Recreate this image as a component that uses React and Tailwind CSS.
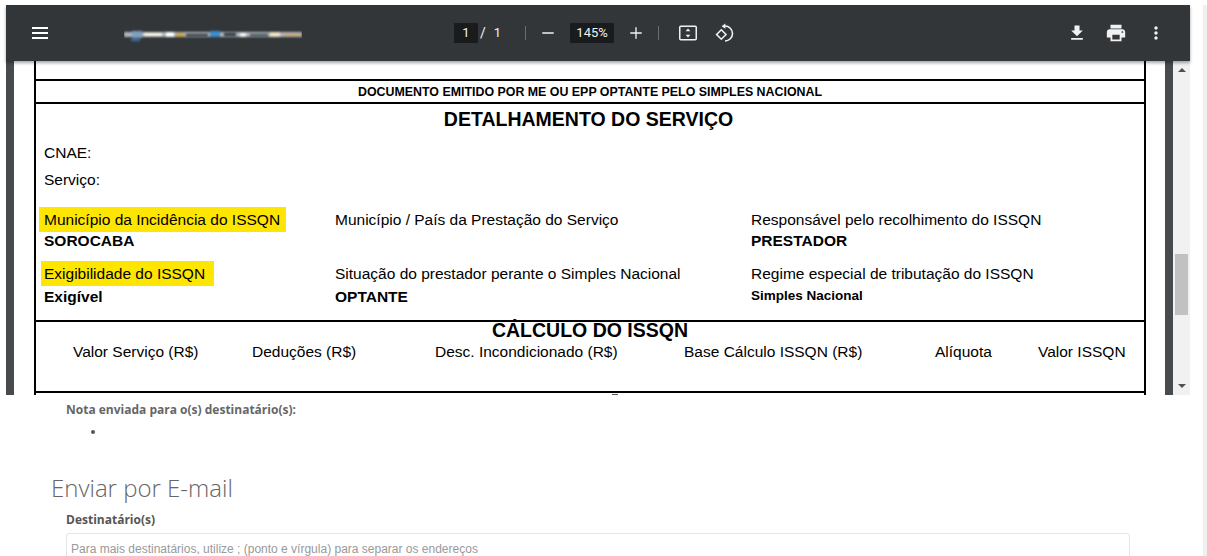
import { Minus, Plus } from 'lucide-react';

const rows = [
  [
    { label: 'Município da Incidência do ISSQN', value: 'SOROCABA', mark: 'pl-[5px] pr-[6px] -ml-[5px]' },
    { label: 'Município / País da Prestação do Serviço' },
    { label: 'Responsável pelo recolhimento do ISSQN', value: 'PRESTADOR' },
  ],
  [
    { label: 'Exigibilidade do ISSQN', value: 'Exigível', gap: 'mt-[2px]', mark: 'pl-[3px] pr-[9px] -ml-[3px]' },
    { label: 'Situação do prestador perante o Simples Nacional', value: 'OPTANTE', gap: 'mt-[2px]' },
    { label: 'Regime especial de tributação do ISSQN', value: 'Simples Nacional', gap: 'mt-px text-[13.5px]' },
  ],
];

const calcCols = ['Valor Serviço (R$)', 'Deduções (R$)', 'Desc. Incondicionado (R$)', 'Base Cálculo ISSQN (R$)', 'Alíquota', 'Valor ISSQN'];

function Icon({ d, className = 'w-6 h-6' }) {
  return (
    <svg viewBox="0 0 24 24" className={className} fill="#f1f1f1">
      <path d={d} />
    </svg>
  );
}

// the file name is smeared in the original, so this is just coloured noise
function BlurredTitle() {
  return (
    <svg width="178" height="16" viewBox="0 0 178 16" className="block">
      <g style={{ filter: 'blur(0.8px)' }}>
        <rect x="0" y="4" width="178" height="5" fill="#aeb4ba" />
        <rect x="8" y="3" width="10" height="7" fill="#7f9fc0" />
        <rect x="7" y="11" width="9" height="2" fill="#3f78b0" />
        <rect x="20" y="5" width="18" height="3" fill="#fbf6e4" />
        <rect x="42" y="4" width="8" height="5" fill="#ffffff" />
        <rect x="52" y="5" width="8" height="4" fill="#c9a050" />
        <rect x="62" y="6" width="22" height="2" fill="#23272c" />
        <rect x="86" y="3" width="10" height="6" fill="#3f8cc8" />
        <rect x="100" y="5" width="12" height="3" fill="#30363e" />
        <rect x="116" y="5" width="6" height="4" fill="#f4f4f4" />
        <rect x="126" y="6" width="18" height="2" fill="#39434e" />
        <rect x="146" y="4" width="10" height="5" fill="#f0e2c4" />
        <rect x="160" y="6" width="17" height="2" fill="#d0a060" />
      </g>
    </svg>
  );
}

export default function App() {
  return (
    <div className="w-[1207px] h-[556px] overflow-hidden flex bg-white font-['Liberation_Sans',sans-serif]">
      <div className="w-[1203px] pt-[5px] pl-[6px]">
        {/* PDF viewer */}
        <div className="w-[1184px] h-[390px] flex flex-col">
          <div className="relative z-10 h-[56px] shrink-0 flex items-center bg-[#323639] shadow-[0_2px_3px_rgba(0,0,0,0.35)] text-[#f1f1f1] font-['Roboto',sans-serif] text-[13px]">
            <div className="w-[26px]" />
            <div className="flex flex-col gap-[3px] w-[16px]">
              <span className="h-[2px] bg-white" />
              <span className="h-[2px] bg-white" />
              <span className="h-[2px] bg-white" />
            </div>
            <div className="ml-[76px] mt-[6px] w-[178px]"><BlurredTitle /></div>
            <div className="ml-[152px] w-[24px] h-[20px] bg-[#191b1c] flex items-center justify-center">1</div>
            <span className="ml-[2px] text-[14px]">/</span>
            <span className="ml-[8px]">1</span>
            <div className="ml-[24px] w-px h-[14px] bg-[#6b6e70]" />
            <Minus className="ml-[13px] w-[18px] h-[18px]" strokeWidth={1.8} />
            <div className="ml-[13px] w-[44px] h-[20px] bg-[#191b1c] flex items-center justify-center">145%</div>
            <Plus className="ml-[13px] w-[18px] h-[18px]" strokeWidth={1.8} />
            <div className="ml-[13px] w-px h-[14px] bg-[#6b6e70]" />
            <svg viewBox="0 0 20 20" className="ml-[19px] w-[20px] h-[20px]" fill="none" stroke="#f1f1f1">
              <rect x="1.75" y="3.25" width="16.5" height="13.5" rx="1" strokeWidth="1.5" />
              <path d="M10 5.5 12.4 8.2H7.6zM10 14.5 7.6 11.8h4.8z" fill="#f1f1f1" stroke="none" />
            </svg>
            <svg viewBox="0 0 20 20" className="ml-[17px] w-[20px] h-[20px]" fill="none" stroke="#f1f1f1" strokeWidth="1.6">
              <path d="M1.6 11.5 6.3 6.8l4.7 4.7-4.7 4.7z" />
              <path d="M10 3a7.5 7.5 0 0 1 0 15" />
              <path d="M10.4 .6 6.6 3.2l3.8 2.6z" fill="#f1f1f1" stroke="none" />
            </svg>
            <div className="ml-auto flex items-center">
              <Icon d="M19 9h-4V3H9v6H5l7 7 7-7zM5 18v2h14v-2H5z" className="w-[20px] h-[20px]" />
              <Icon d="M19 8H5c-1.66 0-3 1.34-3 3v6h4v4h12v-4h4v-6c0-1.66-1.34-3-3-3zm-3 11H8v-5h8v5zm3-7c-.55 0-1-.45-1-1s.45-1 1-1 1 .45 1 1-.45 1-1 1zm-1-9H6v4h12V3z" className="ml-[18px] w-[22px] h-[22px]" />
              <Icon d="M12 8c1.1 0 2-.9 2-2s-.9-2-2-2-2 .9-2 2 .9 2 2 2zm0 2c-1.1 0-2 .9-2 2s.9 2 2 2 2-.9 2-2-.9-2-2-2zm0 6c-1.1 0-2 .9-2 2s.9 2 2 2 2-.9 2-2-.9-2-2-2z" className="ml-[19px] mr-[24px] w-[20px] h-[20px]" />
            </div>
          </div>

          <div className="flex-1 flex min-h-0">
            <div className="w-[8px] bg-[#484b4d]" />
            <div className="w-[1151px] bg-white overflow-hidden pl-[20px] text-black text-[15.5px] leading-[18px]">
              <div className="w-[1112px] h-[340px] border-x-2 border-black">
                <div className="h-[20px] border-b-2 border-black" />
                <div className="h-[23px] border-b-2 border-black flex items-center justify-center font-bold text-[12.4px]">
                  DOCUMENTO EMITIDO POR ME OU EPP OPTANTE PELO SIMPLES NACIONAL
                </div>
                {/* detalhamento */}
                <div className="h-[218px] border-b-2 border-black pl-[8px] pr-[8px]">
                  <div className="h-[30px] pr-[3px] flex items-center justify-center font-bold text-[19.5px]">DETALHAMENTO DO SERVIÇO</div>
                  <div className="h-[28px] mt-[5px] flex items-center">CNAE:</div>
                  <div className="h-[26px] flex items-center">Serviço:</div>
                  <div className="mt-[14px] flex flex-col gap-[7px]">
                    {rows.map((row, i) => (
                      <div key={i} className="grid grid-cols-[291px_416px_1fr] h-[47px]">
                        {row.map((cell, j) => (
                          <div key={j} className="flex flex-col items-start">
                            <span className={`h-[25px] flex items-center whitespace-nowrap ${cell.mark ? 'bg-[#ffe600] ' + cell.mark : ''}`}>{cell.label}</span>
                            {cell.value && <span className={`font-bold ${cell.gap || ''}`}>{cell.value}</span>}
                          </div>
                        ))}
                      </div>
                    ))}
                  </div>
                </div>
                {/* calculo */}
                <div className="h-[71px] border-b-2 border-black">
                  <div className="h-[16px] flex items-center justify-center font-bold text-[19.5px]">CÁLCULO DO ISSQN</div>
                  <div className="mt-[5px] grid grid-cols-[179px_183px_249px_251px_103px_1fr] pl-[37px]">
                    {calcCols.map((col) => (
                      <span key={col} className="whitespace-nowrap">{col}</span>
                    ))}
                  </div>
                </div>
                <div className="mt-[1px] ml-[576px] w-[6px] h-px bg-[#555]" />
              </div>
            </div>
            <div className="w-[8px] bg-[#484b4d]" />
            <div className="w-[17px] bg-[#f1f1f1] flex flex-col items-center">
              <div className="mt-[7px] w-0 h-0 border-x-[4px] border-x-transparent border-b-[4px] border-b-[#505050]" />
              <div className="mt-[182px] w-[13px] h-[61px] bg-[#c1c1c1]" />
              <div className="mt-[69px] w-0 h-0 border-x-[4px] border-x-transparent border-t-[4px] border-t-[#505050]" />
            </div>
          </div>
        </div>

        {/* form below viewer */}
        <div className="pl-[60px] font-['Open_Sans',sans-serif] text-[#666]">
          <p className="mt-[7px] text-[12px] leading-[15px] font-bold">Nota enviada para o(s) destinatário(s):</p>
          <ul className="list-disc ml-[40px] mt-[6px] h-[19px] text-[12px] text-[#555]"><li /></ul>
        </div>
        <h2 className="ml-[45px] mt-[29px] font-['Open_Sans',sans-serif] font-light text-[24px] leading-[34px] text-[#666]">Enviar por E-mail</h2>
        <div className="pl-[60px]">
          <p className="mt-[7px] font-['Open_Sans',sans-serif] text-[12px] leading-[15px] font-bold text-[#555]">Destinatário(s)</p>
          <div className="mt-[6px] w-[1064px] h-[34px] border border-[#e5e5e5] rounded-[3px] pl-[4px] pt-[8px] text-[12px] leading-[15px] text-[#999]">
            Para mais destinatários, utilize ; (ponto e vírgula) para separar os endereços
          </div>
        </div>
      </div>
      <div className="w-[4px] mt-[5px] bg-[#f0f0f0]" />
    </div>
  );
}
